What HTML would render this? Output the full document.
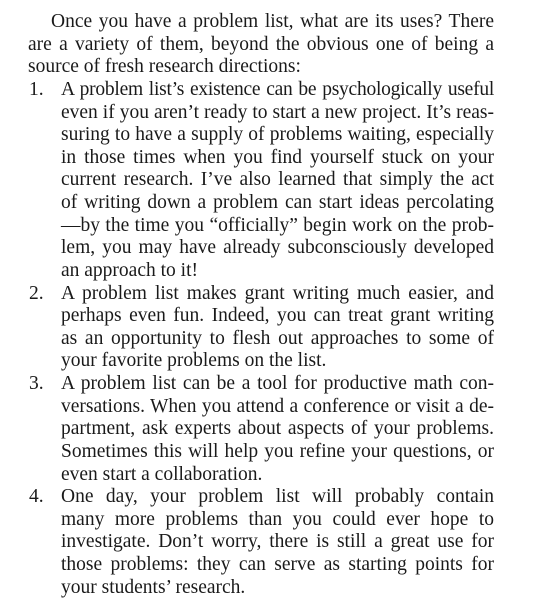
<!DOCTYPE html>
<html><head><meta charset="utf-8"><style>
html,body{margin:0;padding:0;background:#fff;}
body{width:536px;height:615px;overflow:hidden;position:relative;}
.c{position:absolute;top:11px;left:28px;width:466px;font-family:"Liberation Serif",serif;font-size:19.5px;line-height:22.64px;color:#1a1a1a;}
.l{white-space:nowrap;text-align:justify;text-align-last:justify;height:22.64px;overflow:visible;}
.e{text-align-last:left;}
.p{padding-left:23px;}
.i{padding-left:33px;}
.n{position:absolute;left:1px;}
.r{position:relative;}
.t{letter-spacing:-0.25px;}
</style></head><body><div class="c">
<div class="l p">Once you have a problem list, what are its uses? There</div>
<div class="l">are a variety of them, beyond the obvious one of being a</div>
<div class="l e">source of fresh research directions:</div>
<div class="r"><span class="n">1.</span>
<div class="l i t">A problem list’s existence can be psychologically useful</div>
<div class="l i">even if you aren’t ready to start a new project. It’s reas-</div>
<div class="l i">suring to have a supply of problems waiting, especially</div>
<div class="l i">in those times when you find yourself stuck on your</div>
<div class="l i">current research. I’ve also learned that simply the act</div>
<div class="l i">of writing down a problem can start ideas percolating</div>
<div class="l i">—by the time you “officially” begin work on the prob-</div>
<div class="l i">lem, you may have already subconsciously developed</div>
<div class="l i e">an approach to it!</div></div>
<div class="r"><span class="n">2.</span>
<div class="l i">A problem list makes grant writing much easier, and</div>
<div class="l i">perhaps even fun. Indeed, you can treat grant writing</div>
<div class="l i">as an opportunity to flesh out approaches to some of</div>
<div class="l i e">your favorite problems on the list.</div></div>
<div class="r"><span class="n">3.</span>
<div class="l i">A problem list can be a tool for productive math con-</div>
<div class="l i">versations. When you attend a conference or visit a de-</div>
<div class="l i">partment, ask experts about aspects of your problems.</div>
<div class="l i">Sometimes this will help you refine your questions, or</div>
<div class="l i e">even start a collaboration.</div></div>
<div class="r"><span class="n">4.</span>
<div class="l i">One day, your problem list will probably contain</div>
<div class="l i">many more problems than you could ever hope to</div>
<div class="l i">investigate. Don’t worry, there is still a great use for</div>
<div class="l i">those problems: they can serve as starting points for</div>
<div class="l i e">your students’ research.</div></div>
</div></body></html>
